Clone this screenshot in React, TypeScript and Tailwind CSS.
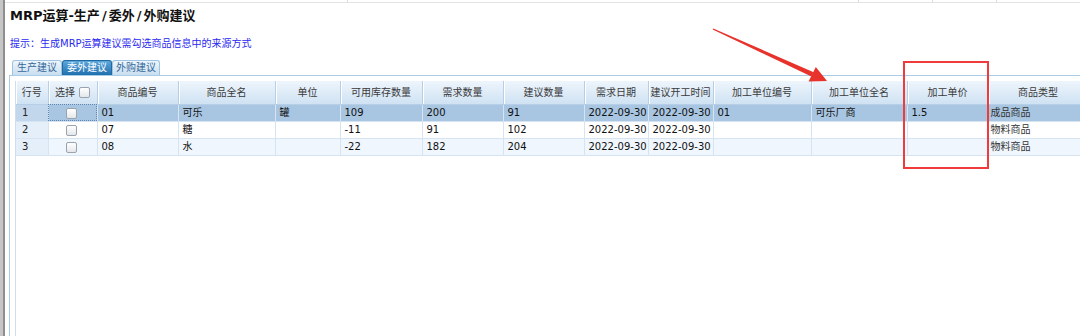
import React from "react";

const FONT = "font-['DejaVu_Sans','Noto_Sans_CJK_SC',sans-serif]";

const COLS = [
  { label: "行号", w: 32 },
  { label: "选择", w: 49 },
  { label: "商品编号", w: 81 },
  { label: "商品全名", w: 97 },
  { label: "单位", w: 65 },
  { label: "可用库存数量", w: 82 },
  { label: "需求数量", w: 81 },
  { label: "建议数量", w: 81 },
  { label: "需求日期", w: 64 },
  { label: "建议开工时间", w: 65 },
  { label: "加工单位编号", w: 98 },
  { label: "加工单位全名", w: 96 },
  { label: "加工单价", w: 81 },
  { label: "商品类型", w: 100 },
];

const ROWS = [
  ["01", "可乐", "罐", "109", "200", "91", "2022-09-30", "2022-09-30", "01", "可乐厂商", "1.5", "成品商品"],
  ["07", "糖", "", "-11", "91", "102", "2022-09-30", "2022-09-30", "", "", "", "物料商品"],
  ["08", "水", "", "-22", "182", "204", "2022-09-30", "2022-09-30", "", "", "", "物料商品"],
];

function Box() {
  return (
    <span className="inline-block w-[11px] h-[11px] border border-[#9aa3ad] rounded-[2px] bg-gradient-to-b from-white to-[#e4e7ea] align-middle" />
  );
}

function Slash() {
  return <span className="inline-block mx-[2px]">/</span>;
}

export default function App() {
  return (
    <div className={`relative w-[1080px] h-[336px] bg-white overflow-hidden flex ${FONT}`}>
      {/* 左侧窗口边 */}
      <div className="w-[3px] bg-[#c6c6c6]" />
      <div className="w-[2px] bg-[#8e8e8e]" />

      <div className="flex-1 flex flex-col min-w-0">
        <div className="h-[3px] border-b border-[#e4e4e4]" />

        {/* 标题 */}
        <div className="h-[25px] flex items-center pl-[5px] text-[13px] font-bold text-[#111] whitespace-nowrap">
          MRP运算-生产<Slash />委外<Slash />外购建议
        </div>

        {/* 提示 */}
        <div className="mt-[8px] h-[16px] leading-[16px] pl-[5px] text-[10px] text-[#2a2af0] whitespace-nowrap">
          提示：生成MRP运算建议需勾选商品信息中的来源方式
        </div>

        {/* 标签页 */}
        <div className="mt-[8px] h-[15px] flex items-end pl-[7px] text-[10px] leading-none">
          <div className="w-[50px] h-[15px] flex items-center justify-center rounded-t-[3px] border border-b-0 border-[#9fc4e2] bg-gradient-to-b from-[#eef6fc] to-[#c9def0] text-[#35689a]">
            生产建议
          </div>
          <div className="w-[50px] h-[15px] flex items-center justify-center rounded-t-[3px] border border-b-0 border-[#1f6aa5] bg-gradient-to-b from-[#5ba8dd] to-[#1f6fae] text-white">
            委外建议
          </div>
          <div className="w-[48px] h-[15px] flex items-center justify-center rounded-t-[3px] border border-b-0 border-[#9fc4e2] bg-gradient-to-b from-[#eef6fc] to-[#c9def0] text-[#35689a]">
            外购建议
          </div>
        </div>

        {/* 表格区 */}
        <div className="flex-1 ml-[4px] border-l border-t border-[#a9cde8] pl-[5px] pt-[5px]">
          <div className="h-full border-l border-[#d2dde9]">
            <table className="table-fixed border-collapse text-[10px] w-[1072px]">
              <colgroup>
                {COLS.map((c) => (
                  <col key={c.label} style={{ width: c.w }} />
                ))}
              </colgroup>
              <thead>
                <tr className="h-[23px] bg-gradient-to-b from-[#eef5fc] to-[#cfe2f3]">
                  {COLS.map((c, i) => (
                    <th
                      key={c.label}
                      className="font-normal text-[#3a3a3a] border-r border-b border-[#b6cfe6] shadow-[inset_1px_0_0_#ffffff] whitespace-nowrap overflow-hidden p-0"
                    >
                      {i === 1 ? (
                        <span className="flex items-center justify-center gap-[4px]">
                          选择 <Box />
                        </span>
                      ) : (
                        c.label
                      )}
                    </th>
                  ))}
                </tr>
              </thead>
              <tbody>
                {ROWS.map((r, ri) => {
                  const sel = ri === 0;
                  const rowBg = sel ? "bg-[#a8c5e1]" : ri === 2 ? "bg-[#eff6fd]" : "bg-white";
                  return (
                    <tr key={ri} className={`h-[17px] ${rowBg}`}>
                      <td className={`pl-[6px] text-[#222] border-r border-b border-[#d6e4f1] ${sel ? "bg-[#c2d7ec]" : "bg-[#e4eff9]"}`}>
                        {ri + 1}
                      </td>
                      <td className={`text-center border-r border-b border-[#d6e4f1] p-0 ${sel ? "outline-1 outline-dotted outline-[#5f86b3] -outline-offset-1" : ""}`}>
                        <span className="inline-block -translate-x-[1px]">
                          <Box />
                        </span>
                      </td>
                      {r.map((v, ci) => (
                        <td
                          key={ci}
                          className={`whitespace-nowrap overflow-hidden border-r border-b border-[#d6e4f1] ${ci === 11 ? "pl-[2px] text-[#333]" : "pl-[4px] text-[#111]"}`}
                        >
                          {v}
                        </td>
                      ))}
                    </tr>
                  );
                })}
              </tbody>
            </table>
          </div>
        </div>
      </div>

      {/* 顶部残留的格线 */}
      <div className="absolute top-0 left-[347px] w-px h-[3px] bg-[#dcdcdc]" />
      <div className="absolute top-0 left-[858px] w-px h-[3px] bg-[#dcdcdc]" />
      <div className="absolute top-0 left-[932px] w-px h-[3px] bg-[#dcdcdc]" />
      <div className="absolute top-0 left-[996px] w-px h-[3px] bg-[#dcdcdc]" />

      {/* 红色箭头 */}
      <svg className="absolute inset-0 pointer-events-none" width="1080" height="336">
        <polygon
          points="712.7,29.6 713.3,28.4 813.6,72.2 811.4,76.6"
          fill="#e8322c"
        />
        <polygon points="827,81 808.6,81.6 815.8,67" fill="#e8322c" />
      </svg>

      {/* 红框 */}
      <div className="absolute left-[903px] top-[61px] w-[86px] h-[108px] border-2 border-[#ef3b3b]" />
    </div>
  );
}
